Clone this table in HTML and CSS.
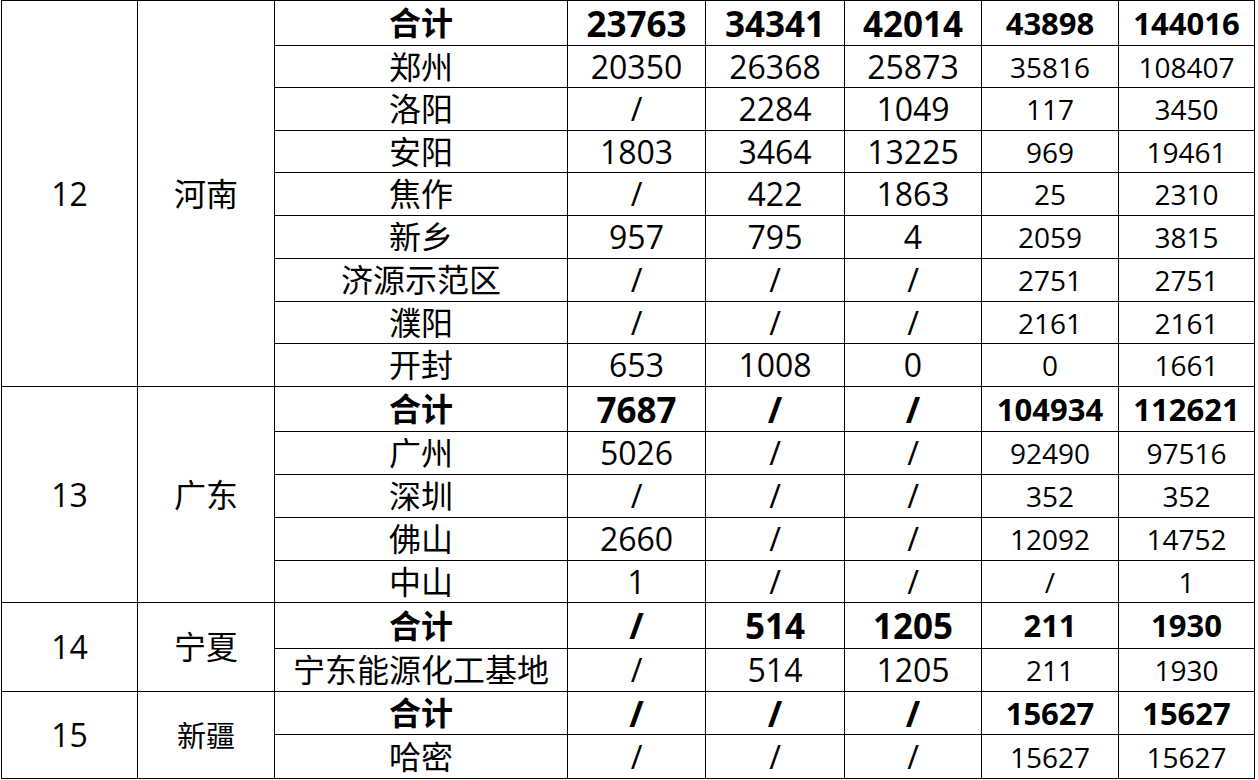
FILE: index.html
```html
<!DOCTYPE html>
<html lang="zh">
<head>
<meta charset="utf-8">
<title>统计表</title>
<link rel="stylesheet" href="styles.css">
</head>
<body>
<table class="grid">
  <colgroup>
    <col class="c-idx"><col class="c-prov"><col class="c-city">
    <col class="c-num"><col class="c-num2"><col class="c-num3"><col class="c-num4"><col class="c-num5">
  </colgroup>
  <tbody>
    <tr class="r45 total">
      <td rowspan="9" class="idx">12</td><td rowspan="9" class="prov">河南</td>
      <td class="lbl">合计</td><td>23763</td><td>34341</td><td>42014</td><td class="sm">43898</td><td class="sm">144016</td>
    </tr>
    <tr class="r42"><td>郑州</td><td>20350</td><td>26368</td><td>25873</td><td class="sm">35816</td><td class="sm">108407</td></tr>
    <tr class="r43"><td>洛阳</td><td>/</td><td>2284</td><td>1049</td><td class="sm">117</td><td class="sm">3450</td></tr>
    <tr class="r42"><td>安阳</td><td>1803</td><td>3464</td><td>13225</td><td class="sm">969</td><td class="sm">19461</td></tr>
    <tr class="r43"><td>焦作</td><td>/</td><td>422</td><td>1863</td><td class="sm">25</td><td class="sm">2310</td></tr>
    <tr class="r43"><td>新乡</td><td>957</td><td>795</td><td>4</td><td class="sm">2059</td><td class="sm">3815</td></tr>
    <tr class="r43"><td>济源示范区</td><td>/</td><td>/</td><td>/</td><td class="sm">2751</td><td class="sm">2751</td></tr>
    <tr class="r42"><td>濮阳</td><td>/</td><td>/</td><td>/</td><td class="sm">2161</td><td class="sm">2161</td></tr>
    <tr class="r43"><td>开封</td><td>653</td><td>1008</td><td>0</td><td class="sm">0</td><td class="sm">1661</td></tr>

    <tr class="r45 total">
      <td rowspan="5" class="idx">13</td><td rowspan="5" class="prov">广东</td>
      <td class="lbl">合计</td><td>7687</td><td>/</td><td>/</td><td class="sm">104934</td><td class="sm">112621</td>
    </tr>
    <tr class="r43"><td>广州</td><td>5026</td><td>/</td><td>/</td><td class="sm">92490</td><td class="sm">97516</td></tr>
    <tr class="r43"><td>深圳</td><td>/</td><td>/</td><td>/</td><td class="sm">352</td><td class="sm">352</td></tr>
    <tr class="r43"><td>佛山</td><td>2660</td><td>/</td><td>/</td><td class="sm">12092</td><td class="sm">14752</td></tr>
    <tr class="r42"><td>中山</td><td>1</td><td>/</td><td>/</td><td class="sm">/</td><td class="sm">1</td></tr>

    <tr class="r46 total">
      <td rowspan="2" class="idx">14</td><td rowspan="2" class="prov">宁夏</td>
      <td class="lbl">合计</td><td>/</td><td>514</td><td>1205</td><td class="sm">211</td><td class="sm">1930</td>
    </tr>
    <tr class="r43"><td>宁东能源化工基地</td><td>/</td><td>514</td><td>1205</td><td class="sm">211</td><td class="sm">1930</td></tr>

    <tr class="r43 total">
      <td rowspan="2" class="idx">15</td><td rowspan="2" class="prov small-prov">新疆</td>
      <td class="lbl">合计</td><td>/</td><td>/</td><td>/</td><td class="sm">15627</td><td class="sm">15627</td>
    </tr>
    <tr class="r44"><td>哈密</td><td>/</td><td>/</td><td>/</td><td class="sm">15627</td><td class="sm">15627</td></tr>
  </tbody>
</table>
</body>
</html>
```
FILE: styles.css
```css
html, body {
  margin: 0;
  padding: 0;
  background: #ffffff;
}

.grid {
  margin-left: 1px;
  border-collapse: collapse;
  table-layout: fixed;
  width: 1254px;
  font-family: "Open Sans", "Noto Sans CJK SC", sans-serif;
  font-size: 32px;
  color: #000000;
}

.c-idx { width: 136px; }
.c-prov { width: 137px; }
.c-city { width: 293px; }
.c-num { width: 138px; }
.c-num2 { width: 139px; }
.c-num3 { width: 137px; }
.c-num4 { width: 137px; }
.c-num5 { width: 136px; }

.grid td {
  border: 1px solid #000000;
  padding: 0;
  text-align: center;
  vertical-align: middle;
  line-height: 1;
  white-space: nowrap;
}

.grid td.sm {
  font-size: 28px;
}

.grid .total td {
  font-weight: 700;
  font-size: 35px;
}

.grid .total td.lbl {
  font-size: 32px;
}

.grid .total td.sm {
  font-size: 31px;
}

.grid .total td.idx,
.grid .total td.prov {
  font-weight: 400;
  font-size: 32px;
}

.grid .total td.small-prov {
  font-size: 29px;
}

.r42 { height: 42px; }
.r43 { height: 43px; }
.r44 { height: 44px; }
.r45 { height: 45px; }
.r46 { height: 46px; }
```
